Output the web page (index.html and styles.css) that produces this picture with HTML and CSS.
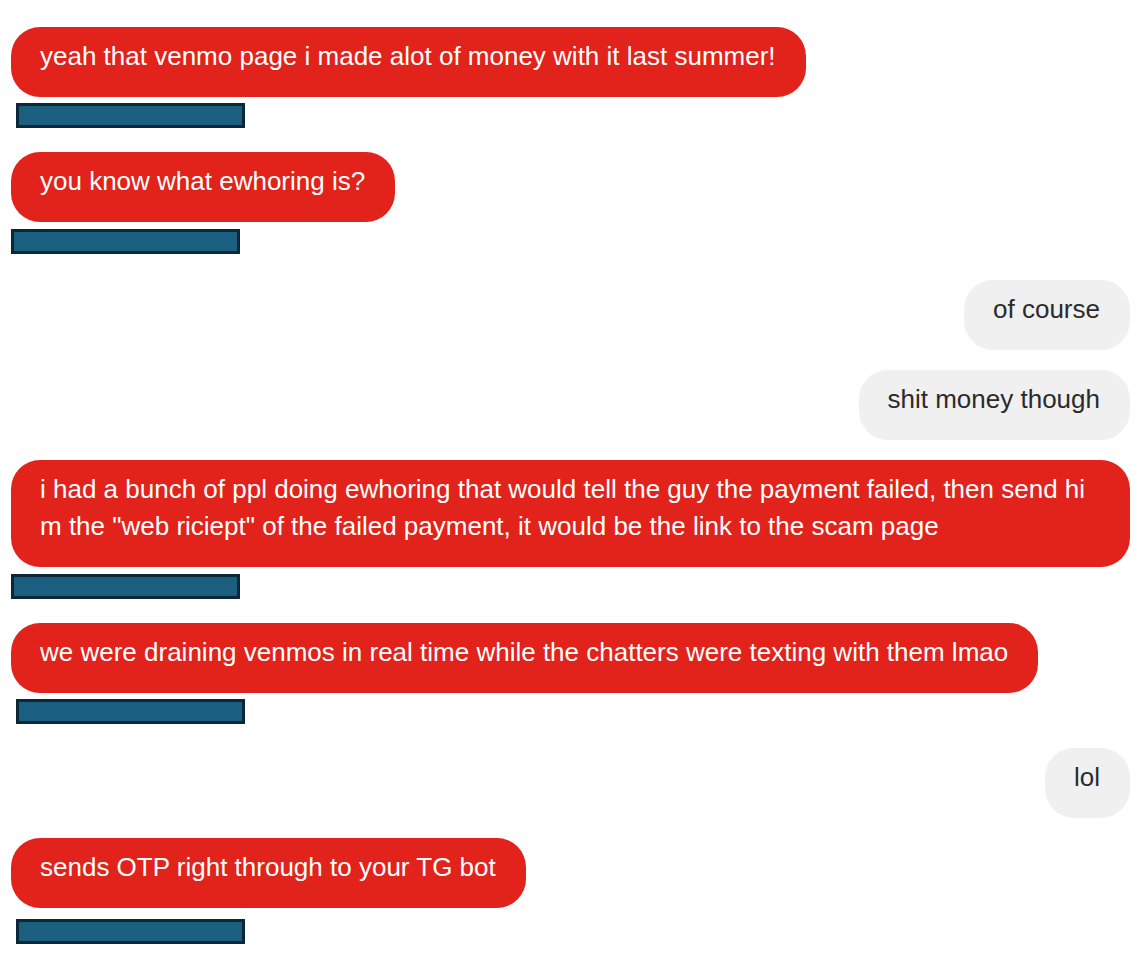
FILE: index.html
```html
<!DOCTYPE html>
<html lang="en">
<head>
<meta charset="utf-8">
<title>Chat</title>
<link rel="stylesheet" href="styles.css">
</head>
<body>
<div class="chat">
  <div class="bubble them">yeah that venmo page i made alot of money with it last summer!</div>
  <div class="redact shift"></div>

  <div class="bubble them after-redact">you know what ewhoring is?</div>
  <div class="redact low"></div>

  <div class="bubble me after-redact wide-gap">of course</div>
  <div class="bubble me">shit money though</div>

  <div class="bubble them">i had a bunch of ppl doing ewhoring that would tell the guy the payment failed, then send him the "web riciept" of the failed payment, it would be the link to the scam page</div>
  <div class="redact low"></div>

  <div class="bubble them after-redact">we were draining venmos in real time while the chatters were texting with them lmao</div>
  <div class="redact shift"></div>

  <div class="bubble me after-redact">lol</div>

  <div class="bubble them">sends OTP right through to your TG bot</div>
  <div class="redact shift far"></div>
</div>
</body>
</html>
```
FILE: styles.css
```css
html, body {
  margin: 0;
  padding: 0;
  background: #ffffff;
}

.chat {
  display: flex;
  flex-direction: column;
  align-items: flex-start;
  padding: 27px 13px 20px 11px;
  font-family: "Liberation Sans", Arial, sans-serif;
  font-size: 26px;
  line-height: 37px;
}

.bubble {
  box-sizing: border-box;
  max-width: 100%;
  padding: 11px 30px 22px 29px;
  border-radius: 29px;
  word-break: break-all;
  margin-top: 20px;
}

.bubble:first-child {
  margin-top: 0;
}

.them {
  background: #e1231b;
  color: #ffffff;
}

.me {
  align-self: flex-end;
  background: #f0f0f0;
  color: #2b2b2b;
}

.after-redact {
  margin-top: 24px;
}

.wide-gap {
  margin-top: 26px;
}

.redact {
  box-sizing: border-box;
  width: 229px;
  height: 25px;
  margin-top: 6px;
  background: #1b5f80;
  border: 3px solid #0b2838;
}

.redact.shift {
  margin-left: 5px;
}

.redact.low {
  margin-top: 7px;
}

.redact.far {
  margin-top: 11px;
}
```
